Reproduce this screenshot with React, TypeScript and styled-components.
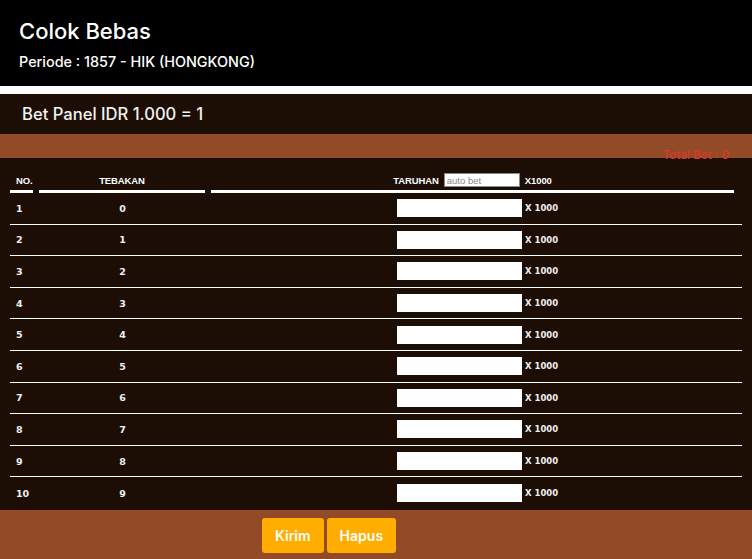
import React from "react";
import styled, { createGlobalStyle } from "styled-components";

const GlobalStyle = createGlobalStyle`
  html, body {
    margin: 0;
    padding: 0;
    background: #1c0e04;
  }
  * {
    box-sizing: border-box;
  }
`;

const rows = Array.from({ length: 10 }, (_, i) => i);

const App = () => {
  return (
    <Page>
      <GlobalStyle />
      <Header>
        <Title>Colok Bebas</Title>
        <Periode>Periode : 1857 - HIK (HONGKONG)</Periode>
      </Header>
      <Divider />
      <PanelBar>Bet Panel IDR 1.000 = 1</PanelBar>
      <TotalStrip>
        <TotalBet>Total Bet : 0</TotalBet>
      </TotalStrip>
      <Table>
        <HeadRow>
          <HeadCell $align="left">NO.</HeadCell>
          <HeadCell>TEBAKAN</HeadCell>
          <HeadCell>
            TARUHAN <AutoBet placeholder="auto bet" /> X1000
          </HeadCell>
        </HeadRow>
        {rows.map((n) => (
          <Row key={n}>
            <NoCell>{n + 1}</NoCell>
            <GuessCell>{n}</GuessCell>
            <BetCell>
              <BetInput />
              <Multiplier>X 1000</Multiplier>
            </BetCell>
          </Row>
        ))}
      </Table>
      <Footer>
        <Button>Kirim</Button>
        <Button>Hapus</Button>
      </Footer>
    </Page>
  );
};

export default App;

const Page = styled.div`
  width: 752px;
  height: 559px;
  overflow: hidden;
  background: #1c0e04;
  font-family: Inter, "Open Sans", sans-serif;
`;

const Header = styled.div`
  background: #000;
  height: 86px;
  padding: 16px 19px 0;
  color: #fff;
`;

const Title = styled.h1`
  margin: 0;
  font-size: 22px;
  font-weight: 500;
  line-height: 30px;
`;

const Periode = styled.div`
  margin-top: 6px;
  font-size: 14.4px;
  font-weight: 500;
  line-height: 20px;
`;

const Divider = styled.div`
  height: 8px;
  background: #fff;
`;

const PanelBar = styled.div`
  height: 40px;
  padding: 0 22px;
  display: flex;
  align-items: center;
  color: #f2f2f2;
  font-size: 16.6px;
  font-weight: 500;
`;

const TotalStrip = styled.div`
  position: relative;
  height: 24px;
  background: #934a27;
`;

const TotalBet = styled.span`
  position: absolute;
  right: 23px;
  top: 14px;
  color: #d63a2c;
  font-size: 11.7px;
  font-weight: 500;
`;

const Table = styled.div`
  padding: 0 10px;
  height: 352px;
`;

const HeadRow = styled.div`
  display: grid;
  grid-template-columns: 23px 166px 523px;
  column-gap: 6px;
  padding-top: 12px;
  height: 35px;
`;

const HeadCell = styled.div<{ $align?: string }>`
  display: flex;
  align-items: center;
  justify-content: ${(p) => (p.$align === "left" ? "flex-start" : "center")};
  gap: 5px;
  padding-left: ${(p) => (p.$align === "left" ? "6px" : "0")};
  height: 23px;
  border-bottom: 3px solid #fff;
  color: #fff;
  font-family: "Liberation Sans", Arial, sans-serif;
  font-weight: bold;
  font-size: 9.5px;
  letter-spacing: -0.1px;
`;

const AutoBet = styled.input`
  width: 76px;
  height: 14px;
  border: 1px solid #888;
  padding: 0 2px;
  font-family: "Liberation Sans", Arial, sans-serif;
  font-size: 9.5px;
  font-weight: normal;
  color: #555;
  background: #fff;
  outline: none;
  &::placeholder {
    color: #8a8a8a;
  }
`;

const Row = styled.div`
  display: grid;
  grid-template-columns: 60px 105px 1fr;
  align-items: center;
  height: 31.6px;
  border-bottom: 1px solid #fff;
  color: #f0f0f0;
  font-family: "DejaVu Sans", sans-serif;
  font-weight: bold;
  font-size: 9.5px;

  &:last-child {
    border-bottom: none;
  }
`;

const NoCell = styled.div`
  padding-left: 6px;
`;

const GuessCell = styled.div`
  text-align: center;
`;

const BetCell = styled.div`
  display: flex;
  align-items: center;
  padding-left: 222px;
  gap: 3px;
`;

const BetInput = styled.input`
  width: 125px;
  height: 18px;
  border: none;
  background: #fff;
  outline: none;
`;

const Multiplier = styled.span`
  font-size: 8.5px;
`;

const Footer = styled.div`
  display: flex;
  gap: 3px;
  padding: 8px 0 0 262px;
  height: 49px;
  background: #934a27;
`;

const Button = styled.button`
  height: 35px;
  padding: 0 13px;
  border: none;
  border-radius: 3px;
  background: #ffad00;
  color: #fff;
  font-family: Inter, sans-serif;
  font-size: 14px;
  font-weight: 600;
`;
